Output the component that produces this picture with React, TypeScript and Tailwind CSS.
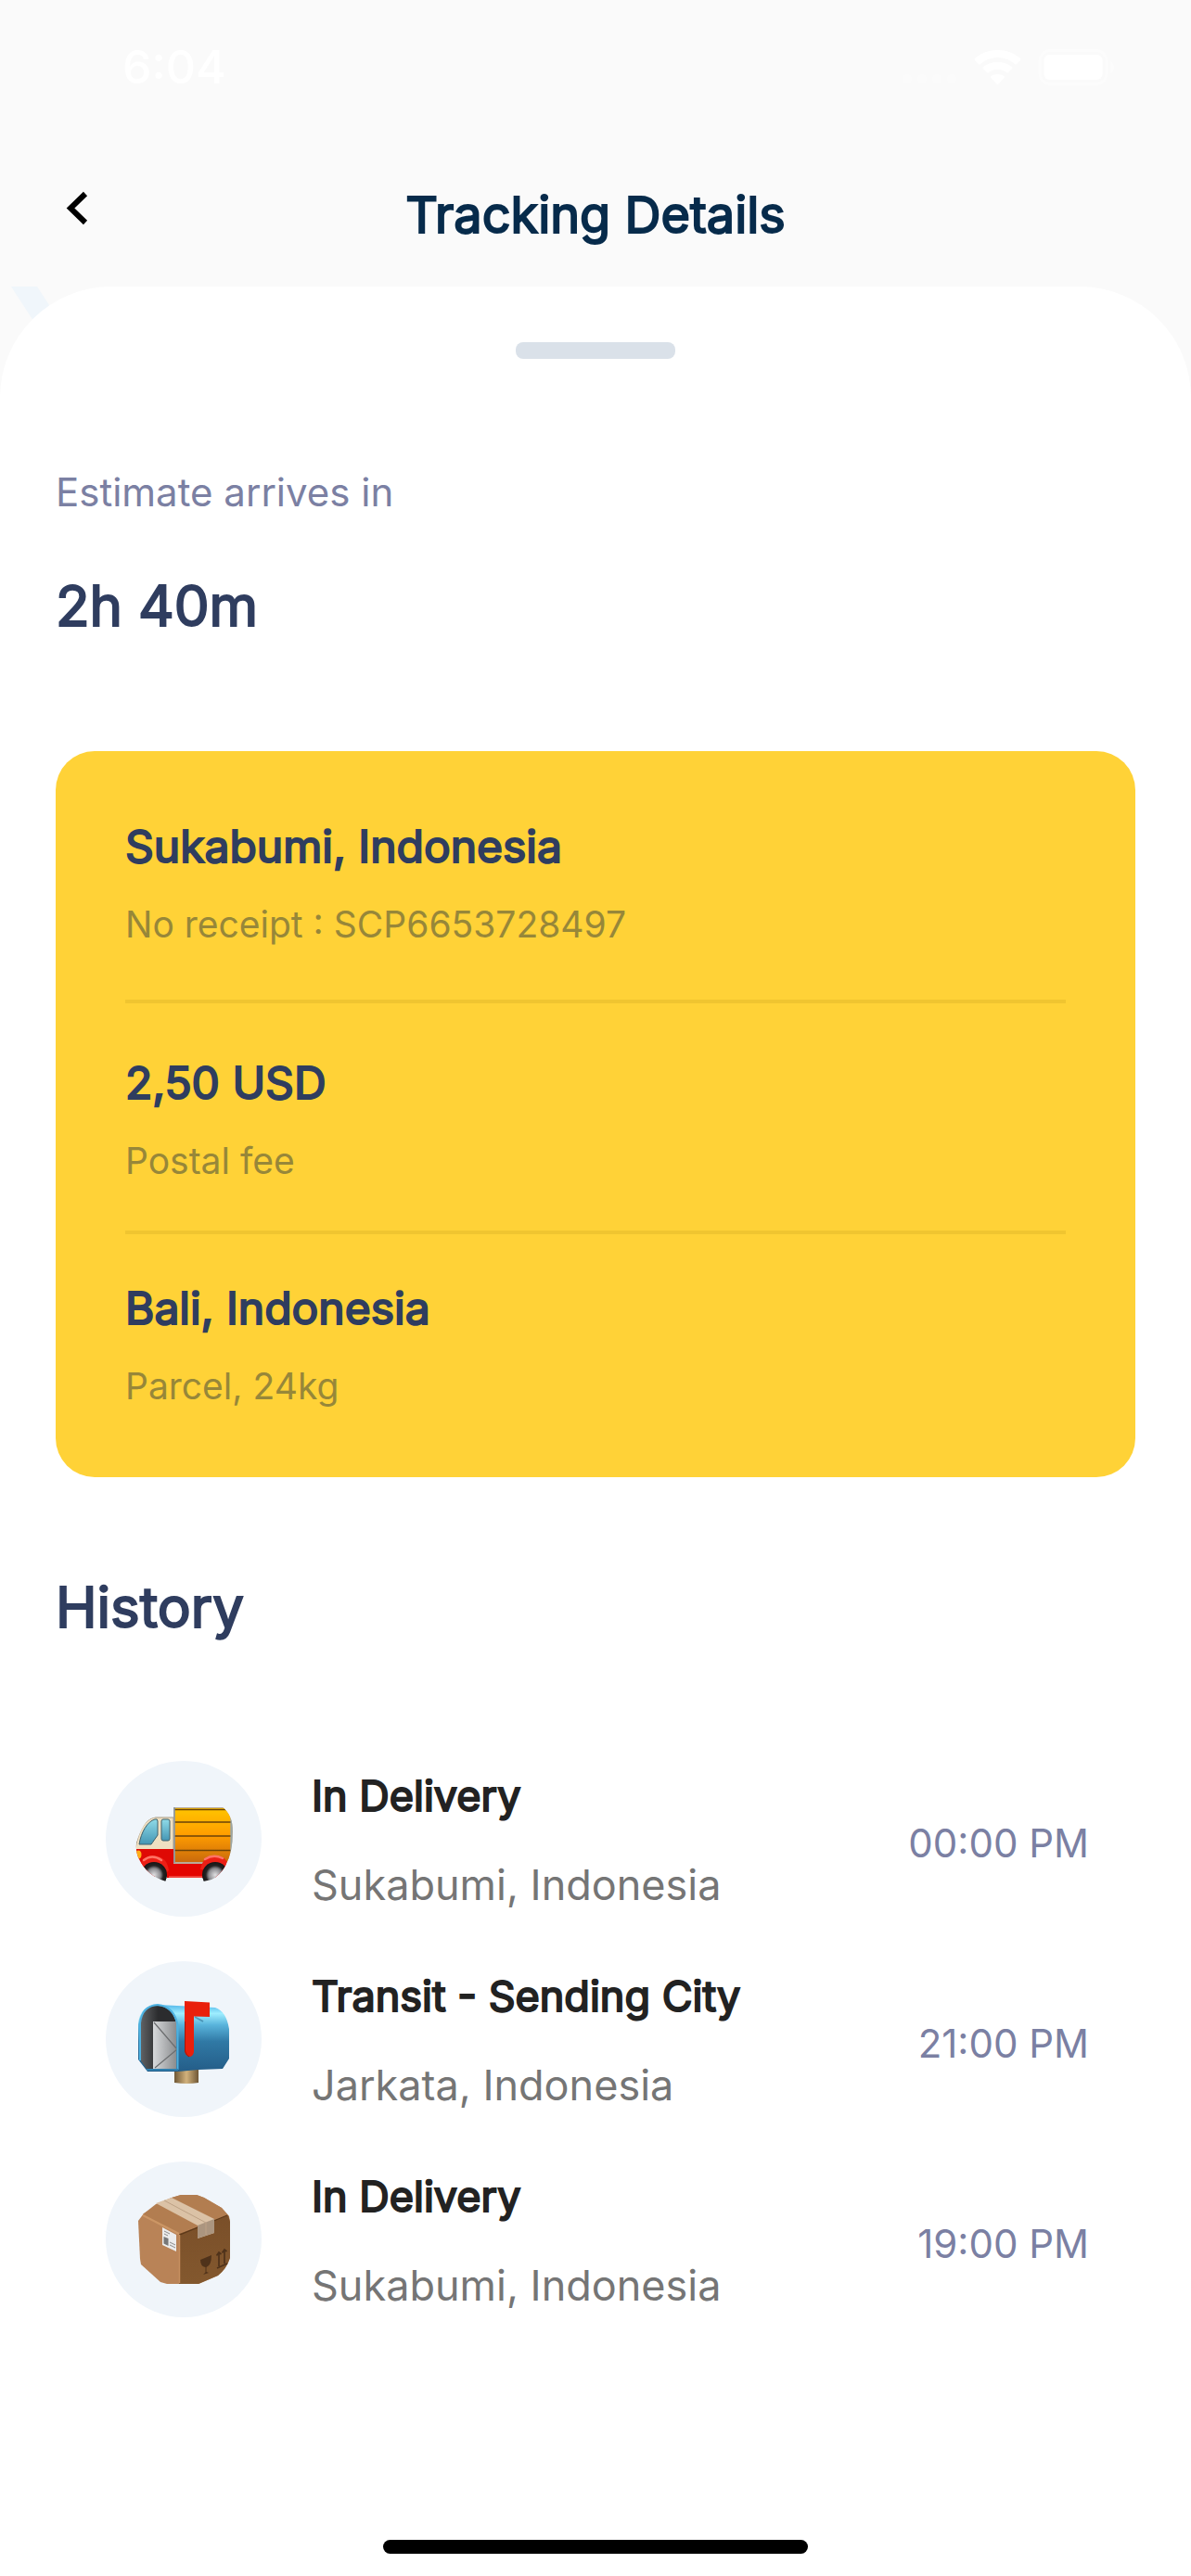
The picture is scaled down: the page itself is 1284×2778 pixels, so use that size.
import React from "react";

const TruckIcon = () => (
  <svg viewBox="14 19 168 168" className="size-full" aria-hidden="true">
    <defs>
      <linearGradient id="cargo" x1="0" y1="0" x2="0" y2="1">
        <stop offset="0" stopColor="#ffc400" />
        <stop offset="0.5" stopColor="#ff9d00" />
        <stop offset="1" stopColor="#c96a0c" />
      </linearGradient>
      <linearGradient id="glass" x1="0" y1="0" x2="0" y2="1">
        <stop offset="0" stopColor="#8fdbe8" />
        <stop offset="1" stopColor="#4596b4" />
      </linearGradient>
      <radialGradient id="hub">
        <stop offset="0" stopColor="#e0e0e2" />
        <stop offset="0.5" stopColor="#8b8b8f" />
        <stop offset="0.62" stopColor="#555558" />
        <stop offset="0.72" stopColor="#232323" />
        <stop offset="1" stopColor="#151515" />
      </radialGradient>
      <clipPath id="truckClip">
        <path d="M47 107C52 92 58 81 66 80L86 68H139Q151 77 151 95Q151 118 143 132Q137 143 128 147L119 149V146H79V149Q58 143 49 123Q46 115 47 107Z" />
      </clipPath>
    </defs>
    <g clipPath="url(#truckClip)">
      <path d="M46 114C49 95 57 81 67 80H87V116H46Z" fill="#efe0c2" stroke="#a89a84" strokeWidth="1" />
      <path d="M50 109C52 96 59 84 67 82Q70 81 70 84V99L63 109Z" fill="url(#glass)" stroke="#41616c" strokeWidth="1" />
      <rect x="74" y="82" width="9" height="23" rx="2" fill="url(#glass)" stroke="#41616c" strokeWidth="1" />
      <rect x="46" y="114" width="42" height="30" fill="#df0905" />
      <path d="M80 130H146V145H80Z" fill="#e30500" />
      <rect x="87" y="69" width="64" height="61" fill="#b9aa98" />
      <rect x="88.500" y="70" width="60" height="58" fill="url(#cargo)" />
      <path d="M88 71.500H149M88 85H149M88 100H149M88 115.500H149" stroke="#6b4308" strokeWidth="1.300" />
      <path d="M88 69V129" stroke="#8996a0" strokeWidth="1.500" />
      <path d="M149.500 76V128" stroke="#9aa6a4" strokeWidth="2" />
      <path d="M50 134Q53 121 66 121Q80 122 82 137L78 141L56 138Z" fill="#ec1f16" />
      <path d="M116 136Q119 121 131 121Q143 121 147 132L136 138Z" fill="#ec1f16" />
      <path d="M55 126Q64 119 74 126M121 125Q130 119 140 124" fill="none" stroke="#ff7466" strokeWidth="2.500" strokeLinecap="round" />
      <path d="M82 144H118" stroke="#ff7f75" strokeWidth="1" />
      <circle cx="66" cy="142" r="14" fill="url(#hub)" />
      <circle cx="132" cy="142" r="14" fill="url(#hub)" />
      <ellipse cx="49" cy="120" rx="3.500" ry="4.500" fill="#ffb019" />
    </g>
  </svg>
);

const MailboxIcon = () => (
  <svg viewBox="14 15 168 168" className="size-full" aria-hidden="true">
    <defs>
      <linearGradient id="box" x1="0" y1="0" x2="0" y2="1">
        <stop offset="0" stopColor="#55b8ea" />
        <stop offset="0.13" stopColor="#9feeff" />
        <stop offset="0.3" stopColor="#59b4dc" />
        <stop offset="0.55" stopColor="#3079a5" />
        <stop offset="1" stopColor="#245d88" />
      </linearGradient>
      <linearGradient id="paper" x1="0" y1="0" x2="1" y2="0">
        <stop offset="0" stopColor="#d8dadc" />
        <stop offset="1" stopColor="#8b8d8f" />
      </linearGradient>
      <linearGradient id="inside" x1="0" y1="0" x2="1" y2="0">
        <stop offset="0" stopColor="#626466" />
        <stop offset="0.5" stopColor="#2b2c2e" />
      </linearGradient>
      <linearGradient id="post" x1="0" y1="0" x2="1" y2="0">
        <stop offset="0" stopColor="#6f5735" />
        <stop offset="0.5" stopColor="#d2b27c" />
        <stop offset="1" stopColor="#6f5735" />
      </linearGradient>
    </defs>
    <path d="M88 131H114V146Q102 148 88 146Z" fill="url(#post)" />
    <path d="M49 121V83Q51 62 70 62L132 65Q144 69 147 88V120L140 131L114 132L92 134H59Z" fill="url(#box)" />
    <path d="M51 121V82Q53 63 70 63Q86 64 90 82V131H58Z" fill="url(#inside)" />
    <path d="M65 80H90V131H65Z" fill="url(#paper)" />
    <path d="M66 81L91 110L67 130" fill="none" stroke="#6b6d6f" strokeWidth="1.200" />
    <path d="M51 122V82Q53 63 70 62Q88 64 91.500 84V132" fill="none" stroke="#4eb1e0" strokeWidth="2" />
    <path d="M58 132H92" stroke="#2f7fae" strokeWidth="2" />
    <path d="M110 75L119 80" stroke="#245f82" strokeWidth="2" opacity="0.500" />
    <path d="M99 58L126 59.500V75L109 74.500V113Q108 118 104 118Q100 117 99 112Z" fill="#e91f0b" />
    <path d="M99.500 80V112Q101 117 104 118" fill="none" stroke="#a31608" strokeWidth="1" />
  </svg>
);

const ParcelIcon = () => (
  <svg viewBox="14 11 168 168" className="size-full" aria-hidden="true">
    <defs>
      <linearGradient id="side" x1="0" y1="0" x2="0" y2="1">
        <stop offset="0" stopColor="#7a4f29" />
        <stop offset="1" stopColor="#83582e" />
      </linearGradient>
    </defs>
    <path d="M49 75L55 67L85 50L95 47H112L120 50L139 61L147 70L148 75V115Q144 127 135 134L114 143H80L73 141L52 122L51 116Z" fill="#b98357" />
    <path d="M54 68L68 57L85 50L95 47H112L120 50L139 61L146 69L93 88Z" fill="#b27d50" />
    <path d="M93 89L146 69L148 76V115Q144 127 135 134L114 143H93Z" fill="url(#side)" />
    <path d="M54 69L93 89" stroke="#cc9665" strokeWidth="2" />
    <path d="M94 90L145 69" stroke="#5b3718" strokeWidth="1.300" />
    <path d="M93.500 90V142" stroke="#c68f60" strokeWidth="1.500" />
    <path d="M68 56L85 50L131 73V88L113 94V80Z" fill="#dbc2a6" />
    <path d="M113 80L131 73V88L113 94Z" fill="#ab957f" />
    <path d="M77 53L122 77V90" fill="none" stroke="#bda186" strokeWidth="1" />
    <path d="M75 82L90 90V108L75 101Z" fill="#ececec" />
    <path d="M77 86L83 89M77 89L81 91M83 98L89 101M83 101L89 104" stroke="#8a8a8a" strokeWidth="1" />
    <path d="M76.500 92L81.500 94V102L76.500 99.500Z" fill="#777" />
    <path d="M116 117L128 112Q128 123 122.500 125V130L125 131L119 133L121.500 130.500V125Q116 124 116 117Z" fill="#4f321a" />
    <path d="M136 124V110M133.500 112.500L136 109L138.500 111M142 121V107M139.500 109.500L142 106L144.500 108M134 126L145 121" fill="none" stroke="#4f321a" strokeWidth="1.700" />
  </svg>
);

const details = [
  { title: "Sukabumi, Indonesia", note: "No receipt : SCP6653728497", spacing: "pb-[57px]" },
  { title: "2,50 USD", note: "Postal fee", spacing: "border-t-4 border-[#f0c530] pt-14 pb-[51px]" },
  { title: "Bali, Indonesia", note: "Parcel, 24kg", spacing: "border-t-4 border-[#f0c530] pt-[50px]" },
];

const history = [
  { Icon: TruckIcon, title: "In Delivery", place: "Sukabumi, Indonesia", time: "00:00 PM" },
  { Icon: MailboxIcon, title: "Transit - Sending City", place: "Jarkata, Indonesia", time: "21:00 PM" },
  { Icon: ParcelIcon, title: "In Delivery", place: "Sukabumi, Indonesia", time: "19:00 PM" },
];

function StatusBar() {
  return (
    <div className="flex h-[141px] items-start justify-between pt-[42px] pr-[81px] pl-[132px] text-white">
      <span className="text-[50px] leading-[60px] font-medium">6:04</span>
      <div className="flex items-center gap-[18px] pt-[11px]">
        <svg viewBox="0 0 60 12" className="mt-6 h-3 w-[60px]" fill="#fff" opacity="0.35" aria-hidden="true">
          <circle cx="6" cy="6" r="5" />
          <circle cx="22" cy="6" r="5" />
          <circle cx="38" cy="6" r="5" />
          <circle cx="54" cy="6" r="5" />
        </svg>
        <svg viewBox="0 0 51 38" className="h-[38px] w-[51px]" fill="#fff" aria-hidden="true">
          <path d="M1 9Q11 0 25.500 0T50 9Q51 10 50 11L46 15Q45 16 44 15Q36 8 25.500 8T7 15Q6 16 5 15L1 11Q0 10 1 9Z" />
          <path d="M10 18Q17 13 25.500 13T41 18Q42 19 41 20L37 24Q36 25 35 24Q31 21 25.500 21T16 24Q15 25 14 24L10 20Q9 19 10 18Z" />
          <path d="M18.500 28Q25.500 24 32.500 28Q33.500 29 32.500 30L26.500 36.500Q25.500 37.500 24.500 36.500L18.500 30Q17.500 29 18.500 28Z" />
        </svg>
        <svg viewBox="0 0 84 39" className="h-[39px] w-[84px]" fill="none" aria-hidden="true">
          <rect x="2" y="1.500" width="72" height="36" rx="11" stroke="#fff" strokeWidth="3" opacity="0.4" />
          <rect x="6.500" y="6" width="63" height="27" rx="6" fill="#fff" />
          <path d="M78 13Q82 15 82 19.500T78 26Z" fill="#fff" opacity="0.4" />
        </svg>
      </div>
    </div>
  );
}

export default function App() {
  return (
    <div className="flex min-h-screen flex-col bg-[#fafafa] font-['Inter',sans-serif]">
      <StatusBar />
      <header className="grid h-[168px] grid-cols-[1fr_auto_1fr] items-center px-[54px]">
        <button type="button" aria-label="Back" className="flex size-[60px] items-center justify-center">
          <svg viewBox="0 0 60 60" className="size-[60px]" fill="none" stroke="#000" strokeWidth="6" aria-hidden="true">
            <path d="M38 14L22 29.500L38 45" />
          </svg>
        </button>
        <h1 className="pt-[14px] text-[54px] leading-[66px] text-[#072b4b] [-webkit-text-stroke:2px_#072b4b]">Tracking Details</h1>
        <span />
      </header>

      <div className="relative flex grow flex-col">
        <svg viewBox="0 0 80 60" className="absolute top-0 left-0 h-[60px] w-20" aria-hidden="true">
          <path d="M12 0H40L79 60H51Z" fill="#f0f6fb" />
        </svg>
        <main className="relative flex grow flex-col rounded-t-[120px] bg-white px-[60px] pt-[60px] pb-6">
          <div className="h-[18px] w-[172px] self-center rounded-[8px] bg-[#dae1e9]" />

          <section className="pt-[118px]">
            <p className="text-[42px] leading-[52px] text-[#7b80a3]">Estimate arrives in</p>
            <p className="pt-[60px] text-[60px] leading-[72px] text-[#2f3d5f] [-webkit-text-stroke:2px_#2f3d5f]">2h 40m</p>
          </section>

          <section className="mt-[121px] rounded-[42px] bg-[#ffd237] px-[75px] pt-[73px] pb-[74px]">
            {details.map((d) => (
              <div key={d.title} className={d.spacing}>
                <h2 className="text-[48px] leading-[60px] text-[#2f3d5f] [-webkit-text-stroke:2px_#2f3d5f]">{d.title}</h2>
                <p className="pt-[30px] text-[39px] leading-[48px] text-[#978739]">{d.note}</p>
              </div>
            ))}
          </section>

          <section className="pt-[100px]">
            <h2 className="text-[60px] leading-[80px] text-[#2f3d5f] [-webkit-text-stroke:2px_#2f3d5f]">History</h2>
            <ul className="flex flex-col gap-12 pt-[126px] pr-[50px] pl-[54px]">
              {history.map(({ Icon, title, place, time }) => (
                <li key={time} className="flex h-[168px] items-center">
                  <span className="size-[168px] shrink-0 overflow-hidden rounded-full bg-[#f0f5fa]">
                    <Icon />
                  </span>
                  <div className="grow pt-1 pl-[54px]">
                    <h3 className="text-[45px] leading-[60px] text-[#222] [-webkit-text-stroke:2px_#222]">{title}</h3>
                    <p className="pt-9 text-[45px] leading-[60px] text-[#757575]">{place}</p>
                  </div>
                  <time className="pt-[10px] text-[42px] leading-[54px] text-[#7b80a3]">{time}</time>
                </li>
              ))}
            </ul>
          </section>

          <div className="mt-auto h-[15px] w-[458px] self-center rounded-full bg-black" />
        </main>
      </div>
    </div>
  );
}
